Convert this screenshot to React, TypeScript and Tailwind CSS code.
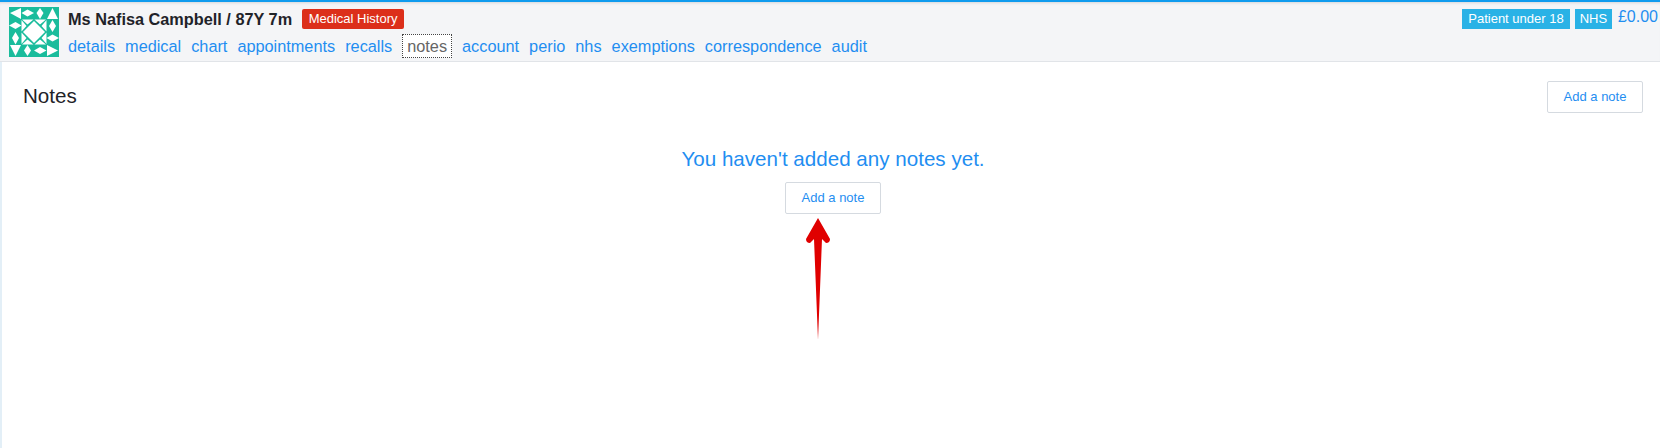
const links = [
  "details",
  "medical",
  "chart",
  "appointments",
  "recalls",
  "notes",
  "account",
  "perio",
  "nhs",
  "exemptions",
  "correspondence",
  "audit",
];

function Avatar() {
  return (
    <svg viewBox="0 0 100 100" className="w-[50px] h-[50px] shrink-0">
      <rect width="100" height="100" fill="#1abc9c" />
      <g fill="#fff">
        {/* corners */}
        <polygon points="2,12 24,2 24,24" />
        <polygon points="76,24 87,2 98,24" />
        <polygon points="2,76 24,76 13,98" />
        <polygon points="76,76 98,87 76,98" />
        {/* outer diamonds */}
        <polygon points="25,12 37,5 50,12 37,19" />
        <polygon points="62,2 69,12 62,24 55,12" />
        <polygon points="87,26 94,38 87,50 80,38" />
        <polygon points="75,62 87,55 100,62 87,69" />
        <polygon points="13,50 20,62 13,75 6,62" />
        <polygon points="0,37 13,30 25,37 13,44" />
        <polygon points="37,76 44,87 37,98 30,87" />
        <polygon points="50,87 62,80 75,87 62,94" />
        {/* centre block */}
        <polygon points="50,28 72,50 50,72 28,50" />
        <polygon points="26,25 49,25 37,35" />
        <polygon points="51,25 74,25 62,35" />
        <polygon points="75,26 65,38 75,49" />
        <polygon points="75,51 65,62 75,74" />
        <polygon points="26,75 49,75 37,65" />
        <polygon points="51,75 74,75 62,65" />
        <polygon points="25,26 35,38 25,49" />
        <polygon points="25,51 35,62 25,74" />
      </g>
    </svg>
  );
}

function NoteButton() {
  return (
    <button className="w-[96px] h-[32px] bg-white border border-[#d5dae0] rounded-[2px] text-[13px] text-[#1f8ef1]">
      Add a note
    </button>
  );
}

export default function App() {
  return (
    <div className="h-[448px] bg-white font-['Liberation_Sans',Arial,sans-serif] overflow-hidden">
      <div className="h-[62px] bg-[#f4f5f7] border-t-2 border-b border-t-[#0f9bee] border-b-[#e1e4e8] flex pl-[9px] pt-[5px] shadow-[inset_0_3px_3px_-2px_rgba(0,0,0,0.12)]">
        <Avatar />
        <div className="ml-[9px] flex-1">
          <div className="flex items-start h-[28px]">
            <span className="text-[16.3px] leading-[24px] font-bold text-[#1f2329]">
              Ms Nafisa Campbell / 87Y 7m
            </span>
            <span className="ml-[10px] mt-[2px] h-[20px] px-[6.5px] rounded-[2px] bg-[#dc2f1a] text-white text-[13px] leading-[20px]">
              Medical History
            </span>
            <div className="ml-auto flex items-start pr-[2px]">
              <span className="mt-[2px] h-[20px] w-[108px] text-center bg-[#29b2e6] text-white text-[13px] leading-[20px]">
                Patient under 18
              </span>
              <span className="ml-[5px] mt-[2px] h-[20px] w-[37px] text-center bg-[#29b2e6] text-white text-[13px] leading-[20px]">
                NHS
              </span>
              <span className="ml-[6px] text-[16px] leading-[20px] text-[#1f8ef1]">
                £0.00
              </span>
            </div>
          </div>
          <nav className="flex gap-[10px] text-[16.3px] leading-[22px] text-[#1f8ef1]">
            {links.map((l) =>
              l === "notes" ? (
                <span
                  key={l}
                  className="px-[4px] text-[#666] bg-white border border-dotted border-[#444] leading-[22px] h-[24px] -mt-[1px]"
                >
                  {l}
                </span>
              ) : (
                <span key={l}>{l}</span>
              )
            )}
          </nav>
        </div>
      </div>

      <div className="h-[386px] border-l-[2px] border-l-[#e3eff7] pl-[21px] pr-[17px] relative">
        <div className="flex items-start justify-between pt-[19px]">
          <h2 className="text-[20.6px] leading-[28px] text-[#1f2329] mt-[1px]">Notes</h2>
          <NoteButton />
        </div>
        <div className="flex flex-col items-center mt-[31px]">
          <p className="text-[20.6px] leading-[30px] text-[#1f8ef1]">
            You haven't added any notes yet.
          </p>
          <div className="mt-[8px]">
            <NoteButton />
          </div>
        </div>
        <svg
          viewBox="0 0 30 124"
          className="absolute left-[801px] top-[156px] w-[30px] h-[124px]"
        >
          <path
            d="M15 0 L27 21 Q27 25 23 25 L19 21 L15 122 L11 21 L7 25 Q3 25 3 21 Z"
            fill="#e00000"
          />
        </svg>
      </div>
    </div>
  );
}
